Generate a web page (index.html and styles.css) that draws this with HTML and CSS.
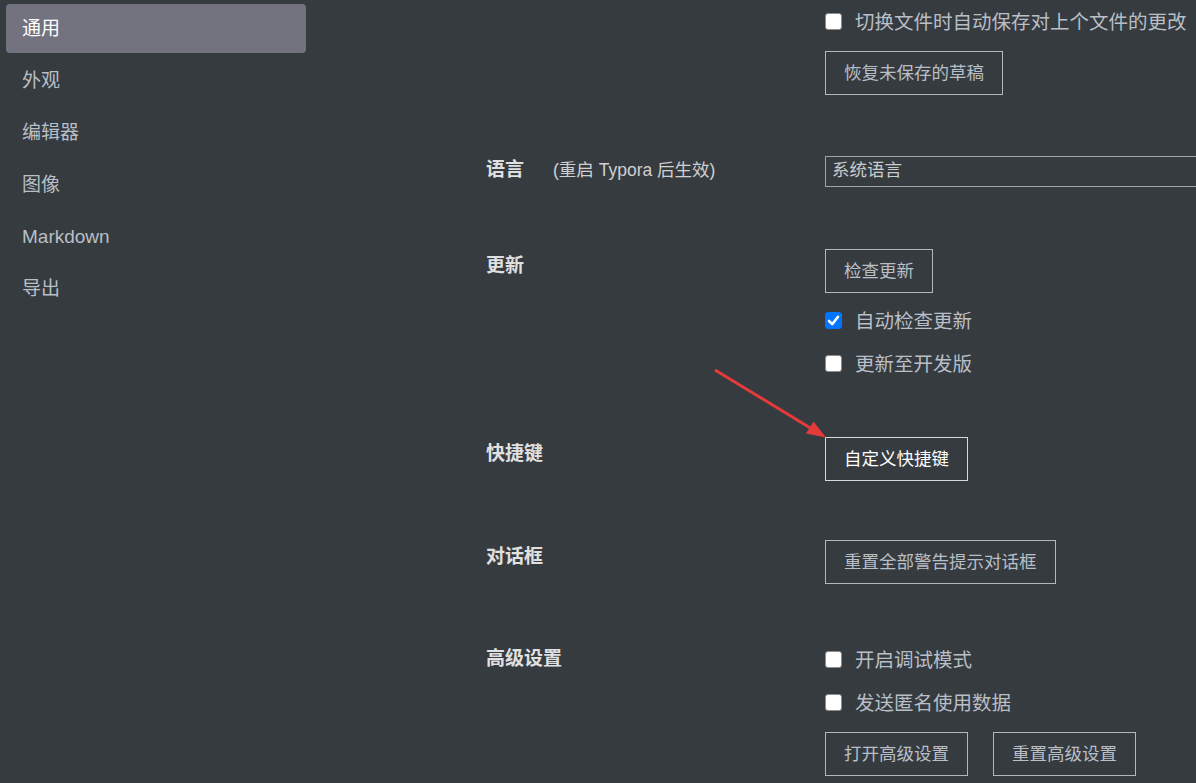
FILE: index.html
```html
<!DOCTYPE html>
<html lang="zh-CN">
<head>
<meta charset="utf-8">
<title>偏好设置</title>
<link rel="stylesheet" href="styles.css">
</head>
<body>
<div class="app">
  <nav class="sidebar">
    <div class="nav-item active">通用</div>
    <div class="nav-item">外观</div>
    <div class="nav-item">编辑器</div>
    <div class="nav-item">图像</div>
    <div class="nav-item">Markdown</div>
    <div class="nav-item">导出</div>
  </nav>
  <main class="content">
    <section class="row row-save">
      <div class="label"></div>
      <div class="controls">
        <div class="check"><span class="box"></span><span class="check-text">切换文件时自动保存对上个文件的更改</span></div>
        <div class="btn-line"><button class="btn">恢复未保存的草稿</button></div>
      </div>
    </section>
    <section class="row row-lang">
      <div class="label label-lang">语言<span class="note">(重启 Typora 后生效)</span></div>
      <div class="controls">
        <div class="select">系统语言</div>
      </div>
    </section>
    <section class="row row-update">
      <div class="label">更新</div>
      <div class="controls">
        <div class="btn-line first"><button class="btn">检查更新</button></div>
        <div class="check after-btn"><span class="box checked"><svg viewBox="0 0 17 17" width="17" height="17"><path d="M4 9 L7.2 12.2 L13 4.8" fill="none" stroke="#fff" stroke-width="2.6" stroke-linecap="round" stroke-linejoin="round"/></svg></span><span class="check-text">自动检查更新</span></div>
        <div class="check"><span class="box"></span><span class="check-text">更新至开发版</span></div>
      </div>
    </section>
    <section class="row row-keys">
      <div class="label">快捷键</div>
      <div class="controls">
        <div class="btn-line first"><button class="btn btn-focus">自定义快捷键</button></div>
      </div>
    </section>
    <section class="row row-dialog">
      <div class="label">对话框</div>
      <div class="controls">
        <div class="btn-line first"><button class="btn">重置全部警告提示对话框</button></div>
      </div>
    </section>
    <section class="row row-adv">
      <div class="label label-adv">高级设置</div>
      <div class="controls">
        <div class="check"><span class="box"></span><span class="check-text">开启调试模式</span></div>
        <div class="check"><span class="box"></span><span class="check-text">发送匿名使用数据</span></div>
        <div class="btn-line btn-pair"><button class="btn">打开高级设置</button><button class="btn">重置高级设置</button></div>
      </div>
    </section>
  </main>
</div>
<svg class="arrow" width="1196" height="783" viewBox="0 0 1196 783">
  <line x1="715" y1="370" x2="812" y2="429" stroke="#e53a3a" stroke-width="3"/>
  <polygon points="826,437.5 806,433.5 813.5,421.5" fill="#e53a3a"/>
</svg>
</body>
</html>
```

FILE: styles.css
```css
html, body {
  margin: 0;
  padding: 0;
  background: #363b40;
  height: 100%;
  overflow: hidden;
}
body {
  font-family: "Liberation Sans", "Noto Sans CJK SC", sans-serif;
  color: #b8bfc6;
  position: relative;
}
.app {
  display: flex;
  align-items: flex-start;
}
.sidebar {
  width: 300px;
  padding: 4px 0 0 6px;
  flex: none;
}
.nav-item {
  height: 49px;
  line-height: 49px;
  margin-bottom: 3px;
  padding-left: 16px;
  font-size: 19px;
  color: #b8bfc6;
  border-radius: 4px;
}
.nav-item.active {
  background: #737380;
  color: #ffffff;
}
.content {
  flex: 1;
  padding-left: 180px;
  min-width: 0;
}
.row {
  display: grid;
  grid-template-columns: 339px 1fr;
  align-items: start;
}
.row-save { margin-top: 0; }
.row-lang { margin-top: 61px; }
.row-update { margin-top: 62px; }
.row-keys { margin-top: 52px; }
.row-dialog { margin-top: 59px; }
.row-adv { margin-top: 54px; }

.label {
  font-size: 19px;
  font-weight: bold;
  color: #e0e0e0;
  line-height: 33px;
  white-space: nowrap;
}
.label-lang { line-height: 28px; }
.label-adv { padding-top: 4px; }
.note {
  font-weight: normal;
  font-size: 17.5px;
  color: #d0d0d0;
  margin-left: 29px;
}
.controls {
  display: flex;
  flex-direction: column;
  align-items: flex-start;
  min-width: 0;
}
.check {
  height: 43px;
  display: flex;
  align-items: center;
  gap: 13px;
}
.box {
  width: 15px;
  height: 15px;
  border: 1px solid #8c8c8c;
  border-radius: 3px;
  background: #ffffff;
  flex: none;
  display: flex;
  position: relative;
}
.box.checked {
  background: #0075ff;
  border-color: #0075ff;
}
.box.checked svg {
  position: absolute;
  left: -1px;
  top: -1px;
}
.check-text {
  font-size: 19.5px;
  color: #b8bfc6;
  white-space: nowrap;
  padding-bottom: 3px;
}
.btn-line {
  margin-top: 8px;
  display: flex;
  gap: 25px;
}
.btn-line.first { margin-top: 0; }
.check.after-btn { margin-top: 6px; }
.btn {
  font-family: "Liberation Sans", "Noto Sans CJK SC", sans-serif;
  font-size: 17.5px;
  height: 44px;
  padding: 0 18px 3px;
  border: 1px solid #b4b8bc;
  background: transparent;
  color: #b8bfc6;
  border-radius: 0;
  white-space: nowrap;
}
.btn-focus {
  color: #ffffff;
  border-color: #d8d8d8;
}
.select {
  box-sizing: border-box;
  width: 400px;
  height: 31px;
  line-height: 26px;
  border: 1px solid #a0a4a8;
  padding-left: 6px;
  font-size: 17.5px;
  color: #c8ccd0;
}
.arrow {
  position: absolute;
  left: 0;
  top: 0;
  pointer-events: none;
}
```
